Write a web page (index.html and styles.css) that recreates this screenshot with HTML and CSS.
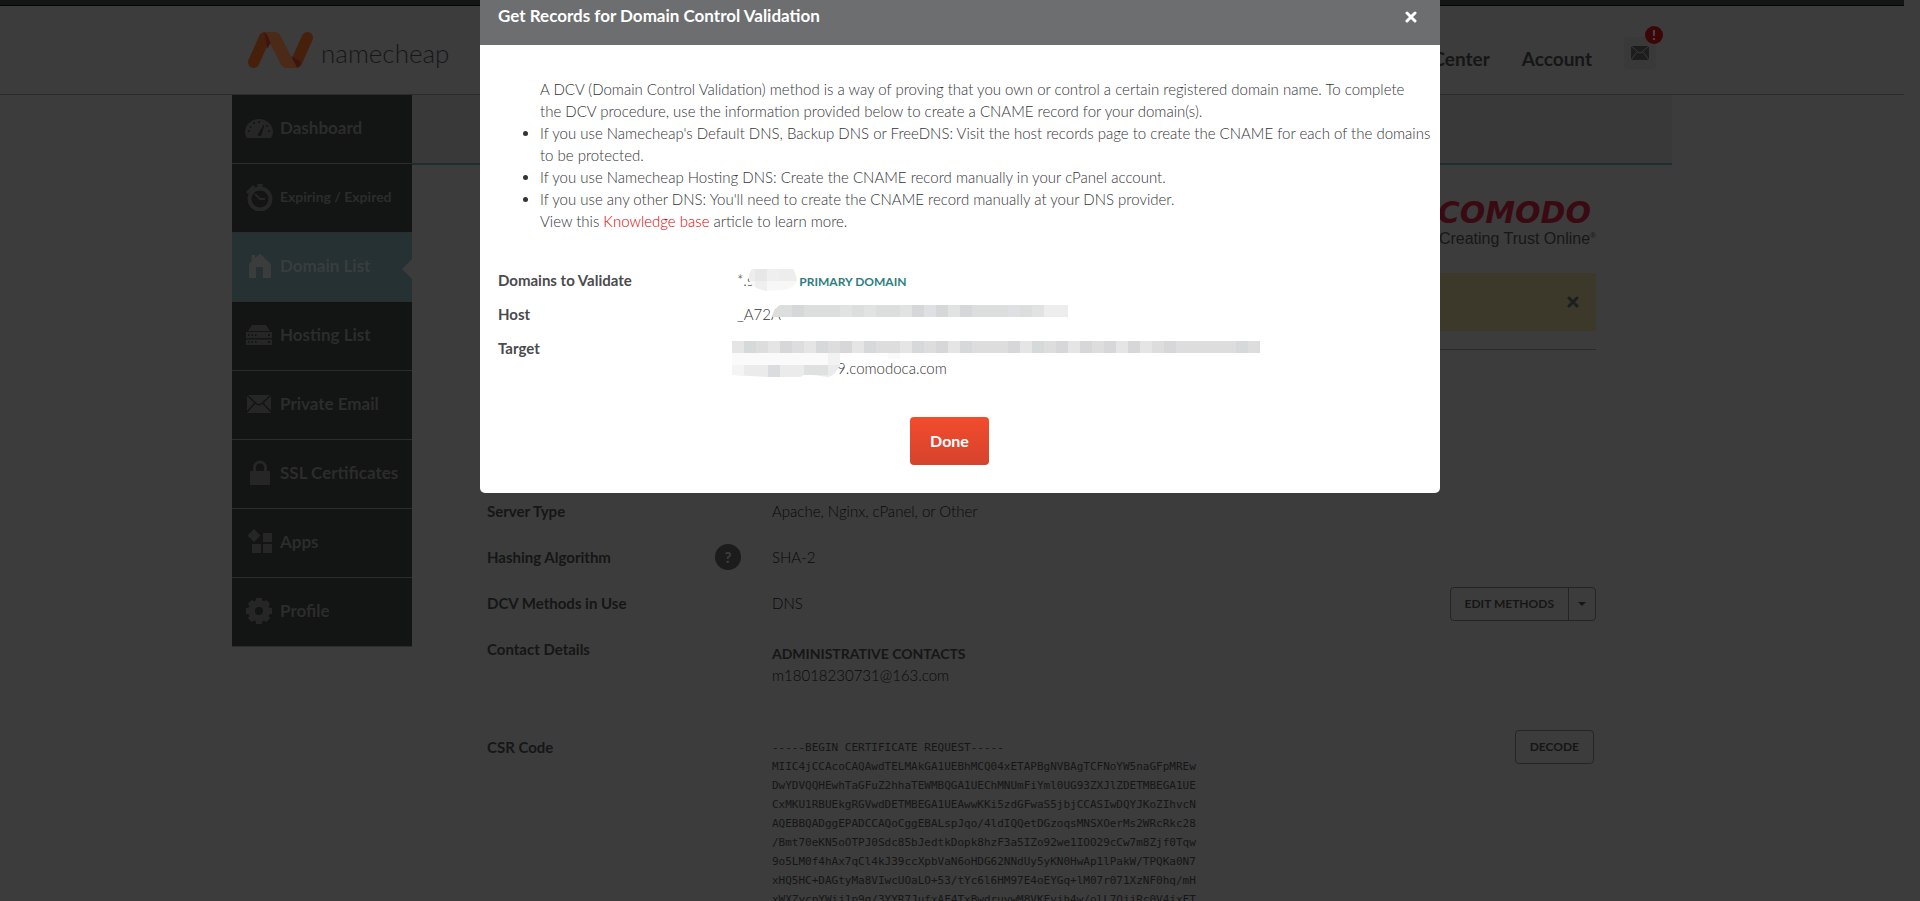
FILE: index.html
```
<!DOCTYPE html>
<html lang="en">
<head>
<meta charset="utf-8">
<title>Get Records for Domain Control Validation</title>
<link rel="stylesheet" href="styles.css">
</head>
<body>
<div class="page">
  <div class="topbar"></div>
  <header class="header">
    <div class="container header-inner">
      <a class="brand" href="#">
        <svg class="brand-mark" viewBox="84 96 195 108" aria-hidden="true">
          <path d="M101 187L134 113" stroke="#47200b" stroke-width="34" stroke-linecap="round"/>
          <path d="M262 113L229 187" stroke="#47200b" stroke-width="34" stroke-linecap="round"/>
          <path d="M134 96H162Q176 96 182 108L214 172L232 204H200Q188 204 182 192L148 126Q144 104 130 97Z" fill="#4b2a18"/>
          <path d="M133 97Q144 104 151 130L142 146Z" fill="#3d1510"/>
          <path d="M214 168L232 203Q240 198 243 186Z" fill="#3d1510"/>
        </svg>
        <span class="brand-name">namecheap</span>
      </a>
      <nav class="nav">
        <a href="#">Help Center</a>
        <a href="#">Account</a>
        <button class="mail" type="button" aria-label="Messages">
          <svg width="18" height="14" viewBox="0 0 18 14" aria-hidden="true"><rect width="18" height="14" fill="#1c1d1d"/><path d="M0 0L7 6Q9 8 11 6L18 0M0 14L6 6M18 14L12 6" fill="none" stroke="#3a3a3a"/></svg>
          <span class="badge">!</span>
        </button>
      </nav>
    </div>
  </header>

  <div class="container columns">
    <nav class="sidebar">
      <a href="#"><svg viewBox="0 0 28 28"><path fill-rule="evenodd" d="M2 24Q0 21 0 18A14 13 0 0 1 28 18Q28 21 26 24Z"/><path d="M13 21L19 11L15.500 22Z" fill="#121514" stroke="#121514"/><g fill="#121514"><circle cx="14" cy="8" r="1"/><circle cx="9" cy="9" r="1"/><circle cx="5.500" cy="13" r="1"/><circle cx="4" cy="17" r="1"/><circle cx="22" cy="12" r="1"/><circle cx="24" cy="17" r="1"/></g></svg>Dashboard</a>
      <a href="#" class="small"><svg viewBox="0 0 28 28"><circle cx="15" cy="16" r="10.500" fill="none" stroke="#262626" stroke-width="4"/><path d="M12.500 1h5v4h-5zM1 9L8 2L10 4L3 11z"/><path d="M10 11L15 16H20" fill="none" stroke="#262626" stroke-width="2"/></svg>Expiring / Expired</a>
      <a href="#" class="active"><svg viewBox="0 0 28 28"><path d="M4 12L6.500 9V3H10V6L15 1.500L26 12V26H18V15H11V26H4Z"/></svg>Domain List</a>
      <a href="#"><svg viewBox="0 0 28 28"><path fill-rule="evenodd" d="M7 4H21L25 10H3ZM1 11H27V17H1ZM1 18.500H27V24H1ZM3 13V15H4.500V13ZM6.500 13V15H8V13ZM10 13V15H11.500V13ZM23 13V15H25V13ZM3 20V22H4.500V20ZM6.500 20V22H8V20ZM10 20V22H11.500V20ZM23 20V22H25V20Z"/></svg>Hosting List</a>
      <a href="#"><svg viewBox="0 0 28 28"><path d="M2 5H26V23H2Z"/><path d="M2 5L11 13.500Q14 16 17 13.500L26 5M2 22L10 13M26 22L18 13" fill="none" stroke="#121514" stroke-width="1.500"/></svg>Private Email</a>
      <a href="#"><svg viewBox="0 0 28 28"><path d="M5 12H25V26H5Z"/><path d="M9.500 13V8.500A5.500 5.500 0 0 1 20.500 8.500V13" fill="none" stroke="#262626" stroke-width="3"/></svg>SSL Certificates</a>
      <a href="#"><svg viewBox="0 0 28 28"><path d="M9 1L15.500 7.500L9 14L2.500 7.500ZM18 5H27V14H18ZM7 16H16V25H7ZM18 16H27V25H18Z"/></svg>Apps</a>
      <a href="#"><svg viewBox="0 0 28 28"><circle cx="14" cy="14" r="7.500" fill="none" stroke="#262626" stroke-width="7"/><path d="M14 1V5M14 23V27M1 14H5M23 14H27M4.800 4.800L8 8M20 20L23.200 23.200M4.800 23.200L8 20M20 8L23.200 4.800" stroke="#262626" stroke-width="6"/></svg>Profile</a>
    </nav>
    <main class="main">
      <div class="tabs"></div>
      <div class="content">
        <div class="comodo">
          <div class="comodo-name">COMODO</div>
          <div class="comodo-tag">Creating Trust Online<sup>®</sup></div>
        </div>
        <div class="alert">
          <button type="button" aria-label="Dismiss"><svg width="12" height="12" viewBox="0 0 12 12"><path d="M2 2L10 10M10 2L2 10" stroke="#1c1e1f" stroke-width="3" stroke-linecap="round"/></svg></button>
        </div>
        <div class="details">
          <div class="row"><div class="label">Server Type</div><div class="value">Apache, Nginx, cPanel, or Other</div></div>
          <div class="row"><div class="label">Hashing Algorithm<button class="help" type="button">?</button></div><div class="value">SHA-2</div></div>
          <div class="row"><div class="label">DCV Methods in Use</div><div class="value">DNS</div>
            <div class="split"><button type="button">EDIT METHODS</button><button type="button" class="caret" aria-label="More methods"><svg width="8" height="4" viewBox="0 0 8 4"><path d="M0 0H8L4 4Z" fill="#151616"/></svg></button></div></div>
          <div class="row tall"><div class="label">Contact Details</div><div class="value contacts"><strong>ADMINISTRATIVE CONTACTS</strong><br>m18018230731@163.com</div></div>
          <div class="row csr"><div class="label">CSR Code</div>
<pre class="value">-----BEGIN CERTIFICATE REQUEST-----
MIIC4jCCAcoCAQAwdTELMAkGA1UEBhMCQ04xETAPBgNVBAgTCFNoYW5naGFpMREw
DwYDVQQHEwhTaGFuZ2hhaTEWMBQGA1UEChMNUmFiYml0UG93ZXJlZDETMBEGA1UE
CxMKU1RBUEkgRGVwdDETMBEGA1UEAwwKKi5zdGFwaS5jbjCCASIwDQYJKoZIhvcN
AQEBBQADggEPADCCAQoCggEBALspJqo/4ldIQQetDGzoqsMNSXOerMs2WRcRkc28
/Bmt70eKN5oOTPJ0Sdc85bJedtkDopk8hzF3a5IZo92we1IOO29cCw7m8Zjf0Tqw
9o5LM0f4hAx7qCl4kJ39ccXpbVaN6oHDG62NNdUy5yKN0HwAp1lPakW/TPQKa0N7
xHQ5HC+DAGtyMa8VIwcUOaLO+53/tYc6l6HM97E4oEYGq+lM07r071XzNF0hq/mH
xWXZycpYWij1p9g/3YYR7JufxAF4TxBwdruvwM8VKFvjh4w/olL7OjjRc0V4jxFT</pre>
            <button class="outline" type="button">DECODE</button></div>
        </div>
      </div>
    </main>
  </div>
</div>

<section class="modal" role="dialog" aria-labelledby="modal-title">
  <div class="modal-head">
    <h2 id="modal-title">Get Records for Domain Control Validation</h2>
    <button class="close" type="button" aria-label="Close"><svg width="12" height="12" viewBox="0 0 12 12"><path d="M2 2L10 10M10 2L2 10" stroke="#fff" stroke-width="3" stroke-linecap="round"/></svg></button>
  </div>
  <div class="modal-body">
    <ul class="intro">
      <li class="plain">A DCV (Domain Control Validation) method is a way of proving that you own or control a certain registered domain name. To complete the DCV procedure, use the information provided below to create a CNAME record for your domain(s).</li>
      <li>If you use Namecheap's Default DNS, Backup DNS or FreeDNS: Visit the host records page to create the CNAME for each of the domains to be protected.</li>
      <li>If you use Namecheap Hosting DNS: Create the CNAME record manually in your cPanel account.</li>
      <li>If you use any other DNS: You'll need to create the CNAME record manually at your DNS provider.</li>
      <li class="plain">View this <a href="#">Knowledge base</a> article to learn more.</li>
    </ul>
    <dl class="records">
      <dt>Domains to Validate</dt>
      <dd>*.s<svg class="mask-domain" width="49" height="22" viewBox="0 0 49 22" aria-hidden="true"><clipPath id="blob"><path d="M4 0H45Q50 8 48 14Q44 20 34 21L18 22Q8 20 2 14Q-1 6 4 0Z"/></clipPath><g clip-path="url(#blob)"><path fill="#f7f7f7" d="M0 0h49v22H0z"/><path fill="#ededed" d="M0 0h19v12H0zM31 0h18v12H31z"/><path fill="#e6e7e7" d="M7 0h12v12H7z"/><path fill="#efefef" d="M19 0h12v12H19zM7 12h12v10H7z"/></g></svg><span class="primary">PRIMARY DOMAIN</span></dd>
      <dt>Host</dt>
      <dd>_A72A<svg class="mask-host" width="296" height="12" viewBox="0 0 296 12" aria-hidden="true"><path fill="#dcdddd" d="M8 0H296V12H0Q2 3 8 0Z"/><path fill="#d6d7d9" d="M20 0h12v12H20zM140 0h12v12H140zM164 0h12v12H164zM188 0h12v12H188z"/><path fill="#e1e3e3" d="M68 0h12v12H68zM92 0h12v12H92zM128 0h12v12H128zM176 0h12v12H176zM260 0h12v12H260z"/><path fill="#dfe0e3" d="M152 0h12v12H152zM236 0h12v12H236z"/><path fill="#ededec" d="M272 0h24v12H272z"/></svg></dd>
      <dt>Target</dt>
      <dd class="target"><svg class="mask-target" width="528" height="36" viewBox="0 0 528 36" aria-hidden="true"><path fill="#dddddd" d="M0 0h528v12H0z"/><path fill="#d7d6d8" d="M48 0h12v12H48zM108 0h12v12H108zM204 0h12v12H204zM276 0h12v12H276zM324 0h12v12H324zM348 0h12v12H348zM372 0h12v12H372zM396 0h12v12H396zM432 0h12v12H432z"/><path fill="#d6d9da" d="M12 0h12v12H12zM84 0h12v12H84zM132 0h12v12H132zM180 0h12v12H180zM228 0h12v12H228zM300 0h12v12H300zM504 0h12v12H504z"/><path fill="#e4e5e4" d="M0 0h12v12H0zM36 0h12v12H36zM72 0h12v12H72zM120 0h12v12H120zM168 0h12v12H168zM216 0h12v12H216zM288 0h12v12H288zM336 0h12v12H336zM384 0h12v12H384zM408 0h12v12H408z"/><path fill="#fafafa" d="M0 12h96v12H0zM156 12h12v6H156z"/><path fill="#f2f2f2" d="M96 12h12v12H96z"/><path fill="#ebebeb" d="M0 24H108Q102 36 96 36L74 33L68 36H36L0 34Z"/><path fill="#f5f4f3" d="M0 24h12v10H0z"/><path fill="#dbdcdf" d="M36 24h12v12H36z"/><path fill="#dfe0e0" d="M72 24h24v10H72z"/></svg>9.comodoca.com</dd>
    </dl>
    <div class="actions"><button class="done" type="button">Done</button></div>
  </div>
</section>
</body>
</html>
```
FILE: styles.css
```
* { box-sizing: border-box; }
html, body { height: 100%; }
body {
  margin: 0;
  overflow: hidden;
  background: #3c3c3c;
  color: #151616;
  font: 300 15px/22px Lato, "Open Sans", sans-serif;
}
a { color: inherit; text-decoration: none; }
button { font: inherit; color: inherit; background: none; border: 0; padding: 0; }
.page { height: 100%; padding-right: 16px; overflow: hidden; }
.topbar { height: 6px; background: #131615; border-bottom: 1px solid #050505; }
.container { max-width: 1440px; margin: 0 auto; }
.header { border-bottom: 1px solid #2a2b2c; }
.header-inner { display: flex; justify-content: space-between; height: 88px; padding: 26px 16px 0; }
.brand { display: flex; gap: 8px; align-items: flex-start; }
.brand-mark { width: 65px; height: 36px; fill: none; }
.brand-name { font-size: 26px; line-height: 42px; font-weight: 300; color: #161717; }
.nav { display: flex; gap: 32px; font-size: 19px; font-weight: 700; line-height: 54px; }
.mail { position: relative; width: 32px; height: 32px; margin-top: 5px; border-radius: 4px; background: #393939; display: grid; place-items: center; }
.badge { position: absolute; top: -11px; right: -7px; width: 18px; height: 18px; border-radius: 50%; background: #3c0606; color: #4f4b52; font-size: 14px; line-height: 18px; }

.columns { display: flex; align-items: flex-start; }
.sidebar { width: 180px; flex: none; }
.sidebar a { position: relative; display: flex; align-items: center; gap: 7px; height: 69px; padding: 0 0 2px 13px; background: #121514; border-bottom: 1px solid #2b2d2d; color: #2c2c2c; font-size: 17px; font-weight: 700; }
.sidebar .small { font-size: 14px; }
.sidebar svg { width: 28px; height: 28px; fill: #262626; }
.sidebar .active { background: #253132; color: #3b3d3d; }
.sidebar .active svg { fill: #3b3c3c; }
.sidebar .active::after { content: ""; position: absolute; right: 0; top: 26px; border: solid transparent; border-width: 10px 10px 10px 0; border-right-color: #3c3c3c; }
.main { flex: 1; }
.tabs { height: 70px; background: #393939; border-bottom: 2px solid #1c2e2f; }
.content { padding: 32px 76px 0 75px; }
.comodo { display: flex; flex-direction: column; align-items: flex-end; height: 76px; color: #171717; }
.comodo-name { padding-right: 5px; color: #3a0a12; font: italic 700 30px/32px "DejaVu Sans", sans-serif; }
.comodo-tag { font: 16px/20px "Liberation Sans", sans-serif; }
.comodo-tag sup { font-size: 8px; line-height: 8px; }
.alert { display: flex; justify-content: flex-end; align-items: center; height: 58px; padding-right: 17px; background: #3c392a; }
.alert svg { display: block; }
.details { margin-top: 18px; padding-top: 150px; border-top: 1px solid #292b2b; }
.row { display: flex; align-items: flex-start; height: 46px; }
.row.tall { height: 98px; }
.label { display: flex; justify-content: space-between; width: 285px; padding-right: 31px; font-weight: 700; }
.value { flex: 1; margin: 0; color: #080909; }
.contacts { padding-top: 4px; }
.contacts strong { color: #151616; font-size: 14px; line-height: 14px; font-weight: 700; }
.help { width: 26px; height: 26px; margin-top: -2px; border-radius: 50%; background: #1c1c1c; color: #3c3c3c; font-weight: 900; }
.split, .outline { border: 1px solid #232424; border-radius: 4px; height: 34px; margin-top: -6px; font-size: 12px; font-weight: 700; }
.split { display: flex; margin-top: -5px; }
.split button { padding: 0 14px; }
.split .caret { padding: 0 9px; border-left: 1px solid #232424; display: grid; place-items: center; }
.outline { padding: 0 14px; margin-right: 2px; }
.csr pre { font: 11px/19px "DejaVu Sans Mono", monospace; color: #151616; padding-top: 2px; }

.modal { position: absolute; top: 0; left: 50%; width: 50%; transform: translateX(-50%); background: #fff; border-radius: 0 0 5px 5px; color: #333436; }
.modal-head { display: flex; justify-content: space-between; height: 45px; padding: 5px 23px 0 18px; background: #6d6e70; color: #fff; }
.modal-head h2 { margin: 0; font-size: 17px; line-height: 22px; font-weight: 700; }
.close { height: 24px; }
.close svg { display: block; }
.modal-body { padding: 33px 18px 28px 18px; }
.intro { margin: 0; padding: 0 0 0 42px; }
.intro li { margin-right: -10px; }
.intro .plain { margin-right: 0; list-style: none; }
.intro a { color: #e00000; }
.records { display: grid; grid-template-columns: 239px 1fr; row-gap: 12px; margin: 37px 0 0; }
.records dt { font-weight: 700; color: #4a4b4c; }
.records dd { position: relative; margin: 0; }
.records svg { position: absolute; }
.mask-domain { left: 11px; top: 0; }
.mask-host { left: 35px; top: 2px; }
.mask-target { left: -5px; top: 4px; }
.records .target { padding: 20px 0 2px 100px; }
.primary { margin-left: 46px; color: #2d7e80; font-size: 12px; line-height: 12px; font-weight: 700; }
.actions { display: flex; justify-content: center; padding: 36px 21px 0 0; }
.done { height: 48px; padding: 0 20px; border-radius: 4px; background: linear-gradient(#f24c2e, #d5432c); color: #fff; font-size: 16px; font-weight: 700; }
```
